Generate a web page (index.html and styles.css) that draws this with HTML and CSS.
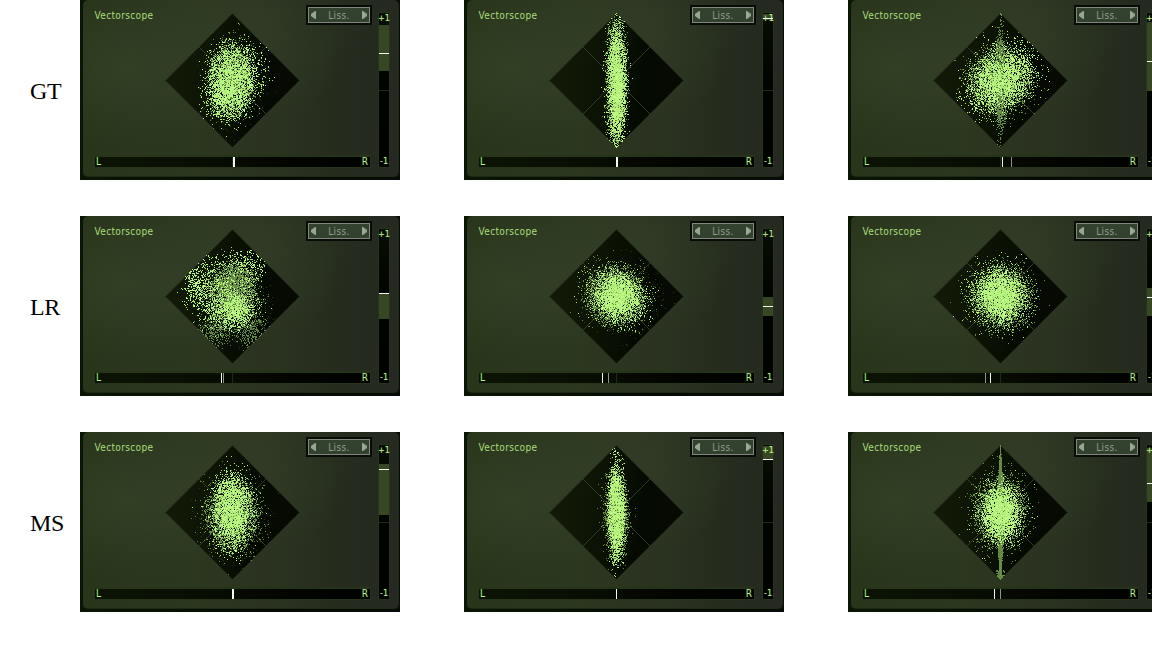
FILE: index.html
```html
<!DOCTYPE html>
<html lang="en">
<head>
<meta charset="utf-8">
<title>Vectorscope comparison</title>
<link rel="stylesheet" href="styles.css">
</head>
<body>
<main class="comparison">
  <section class="row"><h2 class="row-label">GT</h2><div class="scopes"></div></section>
  <section class="row"><h2 class="row-label">LR</h2><div class="scopes"></div></section>
  <section class="row"><h2 class="row-label">MS</h2><div class="scopes"></div></section>
</main>
<template id="scope">
  <article class="scope">
    <div class="face">
      <canvas class="plot" width="137" height="137"></canvas>
      <div class="main">
        <header class="head">
          <span class="title">Vectorscope</span>
          <div class="mode">
            <svg class="arrow" width="5" height="8" viewBox="0 0 5 8"><path d="M5 0V8H4L0 5V3L4 0Z"/></svg>
            <span class="mode-name">Liss.</span>
            <svg class="arrow" width="5" height="8" viewBox="0 0 5 8"><path d="M0 0V8H1L5 5V3L1 0Z"/></svg>
          </div>
        </header>
        <div class="balance"><i class="balance-mid"></i><span>L</span><span>R</span></div>
      </div>
      <div class="correlation"><i class="corr-mid"></i><i class="corr-range"></i><span>+1</span><span>-1</span><i class="corr-now"></i></div>
    </div>
  </article>
</template>
<script src="scopes.js"></script>
</body>
</html>
```

FILE: styles.css
```css
* { box-sizing: border-box; }
body { margin: 0; background: #fff; overflow: hidden; }
.comparison { display: flex; flex-direction: column; gap: 36px; width: 1168px; }
.row { display: flex; height: 180px; align-items: center; }
.row-label {
  width: 80px; flex: none; margin: 0; padding: 1px 0 0 30px;
  font: 400 24px/28px "Liberation Serif", serif; color: #000;
  letter-spacing: -0.3px;
}
.scopes { display: flex; gap: 64px; }
.scope {
  width: 320px; height: 180px; flex: none; padding: 0 1px 3px 3px;
  background: linear-gradient(90deg, #0b1503, #050b02 60%, #080b06);
  font-family: "DejaVu Sans Condensed", "DejaVu Sans", sans-serif;
  font-stretch: condensed; font-size: 10px; line-height: 12px; color: #a9dd78;
}
.face {
  position: relative; display: flex; gap: 6px; height: 177px;
  padding: 5px 8px 9px 11px; border-radius: 5px;
  border: 1px solid #1e2b14; border-top: 0; border-left: 0;
  background:
    radial-gradient(ellipse 130px 80px at 48px 68px, #344127cc, #34412700),
    radial-gradient(ellipse 110px 90px at 165px 35px, #344028aa, #34402800),
    linear-gradient(90deg, #28351b 0%, #2c371f 35%, #2a3220 62%, #252c1d 80%, #252921 100%);
}
.main { display: flex; flex-direction: column; justify-content: space-between; width: 279px; height: 163px; }
.head { display: flex; justify-content: space-between; }
.title { padding: 5px 0 0 0.5px; letter-spacing: 0.36px; }
.mode {
  display: flex; align-items: center; justify-content: space-between;
  width: 66px; height: 20px; padding: 0 3px; border: 2px solid #080c06;
  background: #33412f; box-shadow: inset 0 0 0 1px #7f887b; color: #929d8c;
  position: relative; z-index: 1;
}
.arrow { display: block; fill: #99a595; }
.mode-name { padding-top: 1px; letter-spacing: 0.4px; }
.balance {
  position: relative; display: flex; justify-content: space-between;
  width: 277px; height: 13px; padding: 0 2px 0 1px; border: 1px solid #26351a; border-top-width: 2px;
  background: linear-gradient(90deg, #0b1404, #080d03 45%, #030501 70%, #010300);
  font-size: 10px; line-height: 10px; color: #b9f08c;
}
.balance i { position: absolute; top: 0; height: 10px; width: 1px; }
.balance-mid { left: 137px; background: #1f2914; }
.balance .tick { background: #f4ffef; }
.balance .tick.soft { background: #8f948b; }
.correlation {
  position: relative; display: flex; flex-direction: column; justify-content: space-between;
  align-items: center; width: 12px; height: 156px; margin-top: 7px; padding: 0 0 1px;
  border: 1px solid #26351a; background: linear-gradient(#080d04, #020401 40%, #010200);
  font-size: 9px; line-height: 10px; color: #b9f08c; text-shadow: 0 0 1px #b9f08c66;
}
.correlation span { position: relative; white-space: nowrap; }
.correlation i { position: absolute; left: 0; width: 10px; }
.corr-mid { top: 77px; height: 1px; background: #252c20; }
.corr-range { background: #374723; }
.corr-now { height: 1px; background: #fff; }
.plot { position: absolute; left: 81px; top: 12px; width: 137px; height: 137px; }
```

FILE: scopes.js
```js
const BRIGHT = [186, 250, 128];
const DIM = [104, 142, 70];
const SHADE = [42, 58, 26];

// Clouds: [colour, centre x, centre y, spread x, spread y, tilt, count], centre relative to the diamond's.
const scopes = [
  { range: [25, 71], now: 53, ticks: [[153, 2, 0]], clouds: [
    [SHADE, 1, 2, 17, 25, 0, 350],
    [DIM, 0, -1, 11, 19, 0, 2500], [BRIGHT, -2, 3, 12, 17, 0, 1350], [BRIGHT, 5, -8, 14, 16, 0, 950], [BRIGHT, -7, 17, 11, 11, 0, 500]] },
  { range: [14, 20], now: 18, ticks: [[152, 2, 0]], clouds: [
    [DIM, 0, 0, 5, 32, 0, 2300], [BRIGHT, 1, 5, 4.2, 25, 0, 1900], [BRIGHT, 0, 0, 5.6, 36, 0, 850], [BRIGHT, 0, 0, 3, 52, 0, 150]] },
  { range: [22, 91], now: 61, ticks: [[154, 1, 0], [163, 1, 1]], clouds: [
    [DIM, 0, 0, 16, 16, -.4, 2500], [DIM, 0, 0, 2, 32, 0, 600],
    [BRIGHT, 2, -1, 15, 12, -.8, 1500], [BRIGHT, -1, -1, 22, 16, -.8, 1400], [DIM, 0, 27, 3, 9, 0, 200], [DIM, 0, -28, 2.5, 9, 0, 160]] },
  { range: [77, 103], now: 77, ticks: [[141, 1, 0], [143, 1, 1]], clouds: [
    [BRIGHT, -36, -8, 7, 10, 0, 260], [BRIGHT, 12, -28, 10, 9, 0, 370], [BRIGHT, -16, -15, 16, 14, 0, 550],
    [SHADE, 18, 18, 12, 18, 0, 250], [DIM, -17, 34, 8, 8, 0, 360], [DIM, 17, 32, 8, 9, 0, 330],
    [DIM, 0, -4, 12, 14, 0, 2700], [BRIGHT, 0, 5, 14, 13, 0, 620], [BRIGHT, 4, 15, 8, 8, 0, 560], [BRIGHT, -20, 15, 9, 9, 0, 180]] },
  { range: [81, 100], now: 90, ticks: [[138, 1, 0], [144, 1, 1]], clouds: [
    [SHADE, 7, 4, 20, 20, 0, 400], [DIM, -1, -1, 15, 14, .5, 3100],
    [BRIGHT, 1, 0, 10, 10, .5, 1600], [BRIGHT, 1, 1, 17, 14, .7, 900]] },
  { range: [72, 100], now: 81, ticks: [[137, 1, 1], [142, 1, 0]], clouds: [
    [DIM, 1, 0, 15, 16, -.3, 3000], [BRIGHT, 0, -1, 11, 12, -.3, 1800], [BRIGHT, -1, -1, 16, 17, -.5, 900]] },
  { range: [32, 83], now: 37, ticks: [[152, 2, 0]], clouds: [
    [SHADE, 0, 8, 18, 22, 0, 350], [DIM, 0, 3, 14, 18, 0, 2700],
    [BRIGHT, 0, -5, 9, 16, 0, 1500], [BRIGHT, 0, 0, 11, 21, 0, 1050]] },
  { range: [14, 28], now: 27, ticks: [[152, 1, 0]], clouds: [
    [DIM, 0, 3, 5.5, 23, 0, 1900], [BRIGHT, 0, 0, 3.8, 19, 0, 2100], [BRIGHT, 0, 0, 4.6, 27, 0, 600], [DIM, 0, 0, 9, 18, 0, 150], [BRIGHT, 0, 0, 2.5, 45, 0, 90]] },
  { range: [16, 70], now: 51, ticks: [[146, 1, 0], [152, 1, 1]], clouds: [
    [DIM, 0, -1, 14, 18, 0, 2200], [BRIGHT, 0, 0, 9, 13, 0, 2200], [BRIGHT, 0, 0, 14, 17, 0, 500]], spikes: true },
];

function randomSource(seed) {
  return () => {
    seed = (seed + 0x6D2B79F5) | 0;
    let t = Math.imul(seed ^ (seed >>> 15), 1 | seed);
    t = (t + Math.imul(t ^ (t >>> 7), 61 | t)) ^ t;
    return ((t ^ (t >>> 14)) >>> 0) / 4294967296;
  };
}

function drawPlot(canvas, scope, seed) {
  const ctx = canvas.getContext('2d');
  const c = 68.5, r = 67.5;
  const diamond = new Path2D(`M${c} ${c - r}L${c + r} ${c}L${c} ${c + r}L${c - r} ${c}Z`);
  const fill = ctx.createLinearGradient(0, 0, 137, 20);
  fill.addColorStop(0, '#141c08');
  fill.addColorStop(.5, '#0b1204');
  fill.addColorStop(.75, '#050a01');
  fill.addColorStop(1, '#060a03');
  ctx.fillStyle = fill;
  ctx.fill(diamond);
  ctx.lineWidth = 1;
  ctx.strokeStyle = '#353d2d';
  ctx.stroke(diamond);
  const h = r / 2;
  ctx.strokeStyle = '#30382a';
  ctx.stroke(new Path2D(`M${c - h} ${c - h}L${c + h} ${c + h}M${c + h} ${c - h}L${c - h} ${c + h}`));

  const random = randomSource(seed);
  const dot = (x, y, colour) => {
    const over = Math.abs(x) + Math.abs(y);
    if (over > 74) return;
    if (over > 67) { x *= 67 / over; y *= 67 / over; if (random() < .7) return; }
    const k = .9 + random() * .16;
    ctx.fillStyle = `rgb(${colour.map(v => Math.min(255, v * k)).join()})`;
    ctx.fillRect(68 + Math.round(x), 68 + Math.round(y), 1, 1);
  };
  if (scope.spikes) {
    for (let y = -67; y <= 67; y++) {
      const w = y < 0 ? (67 + y) / 8 : Math.max(2.5, (67 - y) / 6);
      for (let i = 0; i < 14; i++) dot((random() - .5) * Math.min(w, 6), y, DIM);
    }
    for (let i = 0; i < 80; i++) {
      const y = 58 + random() * 9;
      dot((random() - .5) * Math.min(8, 2 * (67 - y)), y, DIM);
    }
  }
  for (const [colour, cx, cy, sx, sy, tilt, count] of scope.clouds) {
    for (let i = 0; i < count; i++) {
      // Distances past 1.6 spreads are pulled in so the clouds have a firm rim.
      let d = Math.sqrt(-2 * Math.log(1 - random()));
      if (d > 1.6) d = 1.6 + (d - 1.6) * .72;
      const a = 2 * Math.PI * random();
      const u = d * Math.cos(a) * sx, v = d * Math.sin(a) * sy;
      dot(cx + u * Math.cos(tilt) - v * Math.sin(tilt), cy + u * Math.sin(tilt) + v * Math.cos(tilt), colour);
    }
  }
}

const template = document.getElementById('scope');
const rows = document.querySelectorAll('.scopes');
scopes.forEach((scope, index) => {
  const node = template.content.cloneNode(true);
  const range = node.querySelector('.corr-range');
  range.style.top = `${scope.range[0] - 13}px`;
  range.style.height = `${scope.range[1] - scope.range[0]}px`;
  node.querySelector('.corr-now').style.top = `${scope.now - 13}px`;
  for (const [x, width, soft] of scope.ticks) {
    const tick = document.createElement('i');
    tick.className = soft ? 'tick soft' : 'tick';
    tick.style.left = `${x - 15}px`;
    tick.style.width = `${width}px`;
    node.querySelector('.balance').append(tick);
  }
  drawPlot(node.querySelector('canvas'), scope, 71 + index * 13);
  rows[Math.floor(index / 3)].append(node);
});
```
